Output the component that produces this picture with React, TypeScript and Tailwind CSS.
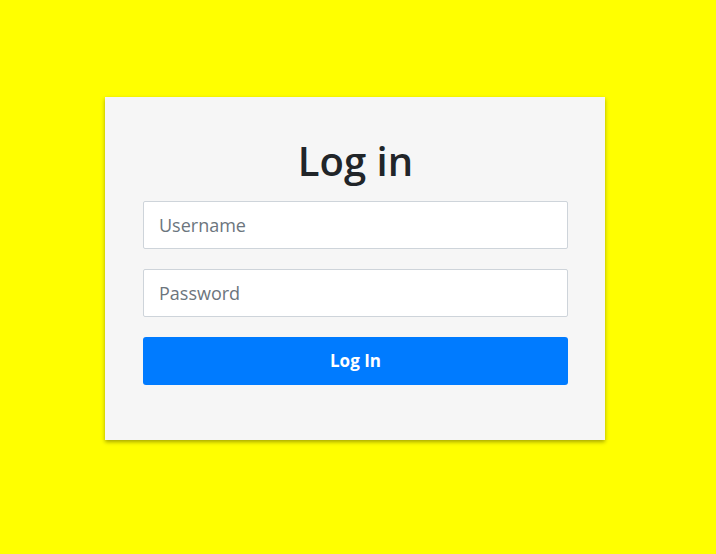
import React from 'react';

export default function App() {
  return (
    <div className="min-h-[554px] w-full bg-[#ffff00] pt-[97px]" style={{ fontFamily: '"Open Sans", "Noto Sans", sans-serif' }}>
      <div className="ml-[105px] w-[500px] h-[343px] bg-[#f6f6f6] shadow-[0_2px_4px_rgba(0,0,0,0.35)] pl-[38px] pr-[37px] pt-[40px]">
        <h1 className="text-center text-[40px] leading-[48px] font-semibold text-[#212529] mb-[16px]">Log in</h1>
        <form className="flex flex-col gap-[20px]" onSubmit={(e) => e.preventDefault()}>
          <input
            type="text"
            placeholder="Username"
            className="h-[48px] w-full bg-white border border-[#ced4da] rounded-[2px] px-[15px] text-[18px] text-[#495057] placeholder:text-[#6c757d] outline-none"
          />
          <input
            type="password"
            placeholder="Password"
            className="h-[48px] w-full bg-white border border-[#ced4da] rounded-[2px] px-[15px] text-[18px] text-[#495057] placeholder:text-[#6c757d] outline-none"
          />
          <button
            type="submit"
            className="h-[48px] w-full bg-[#007bff] text-white font-bold text-[17px] rounded-[3px]"
          >
            Log In
          </button>
        </form>
      </div>
    </div>
  );
}
